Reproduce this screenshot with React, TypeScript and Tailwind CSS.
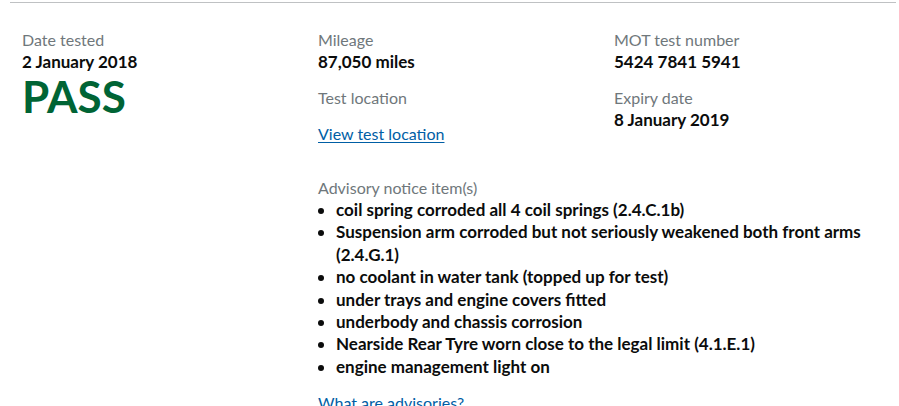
import React from 'react';

const font = { fontFamily: 'Lato, "Noto Sans", Arial, sans-serif' };

const Label: React.FC<{ children: React.ReactNode }> = ({ children }) => (
  <div className="text-[16px] leading-[22px] text-[#6f777b]">{children}</div>
);

const Value: React.FC<{ children: React.ReactNode }> = ({ children }) => (
  <div className="text-[17px] leading-[22px] font-bold text-[#0b0c0c]">{children}</div>
);

const advisories = [
  'coil spring corroded all 4 coil springs (2.4.C.1b)',
  'Suspension arm corroded but not seriously weakened both front arms (2.4.G.1)',
  'no coolant in water tank (topped up for test)',
  'under trays and engine covers fitted',
  'underbody and chassis corrosion',
  'Nearside Rear Tyre worn close to the legal limit (4.1.E.1)',
  'engine management light on',
];

export default function App() {
  return (
    <div className="bg-white w-[899px] h-[406px] overflow-hidden" style={font}>
      <div className="pt-[2px] pl-[10px] pr-[3px]">
        <div className="border-t border-[#bfc1c3]" />
      </div>
      <div className="ml-[7px] w-[888px] pt-[26px] grid grid-cols-3">
        <div className="px-[15px]">
          <Label>Date tested</Label>
          <Value>2 January 2018</Value>
          <div className="text-[44px] leading-[46px] font-bold text-[#006435]">PASS</div>
        </div>
        <div className="px-[15px]">
          <Label>Mileage</Label>
          <Value>87,050 miles</Value>
          <div className="mt-[14px]">
            <Label>Test location</Label>
          </div>
          <a href="#" className="block mt-[14px] text-[16px] leading-[22px] text-[#005ea5] underline underline-offset-2">
            View test location
          </a>
        </div>
        <div className="px-[15px]">
          <Label>MOT test number</Label>
          <Value>5424 7841 5941</Value>
          <div className="mt-[14px]">
            <Label>Expiry date</Label>
          </div>
          <Value>8 January 2019</Value>
        </div>
        <div />
        <div className="col-span-2 px-[15px] mt-[32px]">
          <Label>Advisory notice item(s)</Label>
          <ul className="list-disc pl-[18px] text-[17px] leading-[22.4px] font-bold text-[#0b0c0c] marker:text-[#0b0c0c]">
            {advisories.map((a) => (
              <li key={a}>{a}</li>
            ))}
          </ul>
          <a href="#" className="block mt-[14px] text-[16px] leading-[22px] text-[#005ea5] underline underline-offset-2">
            What are advisories?
          </a>
        </div>
      </div>
    </div>
  );
}
